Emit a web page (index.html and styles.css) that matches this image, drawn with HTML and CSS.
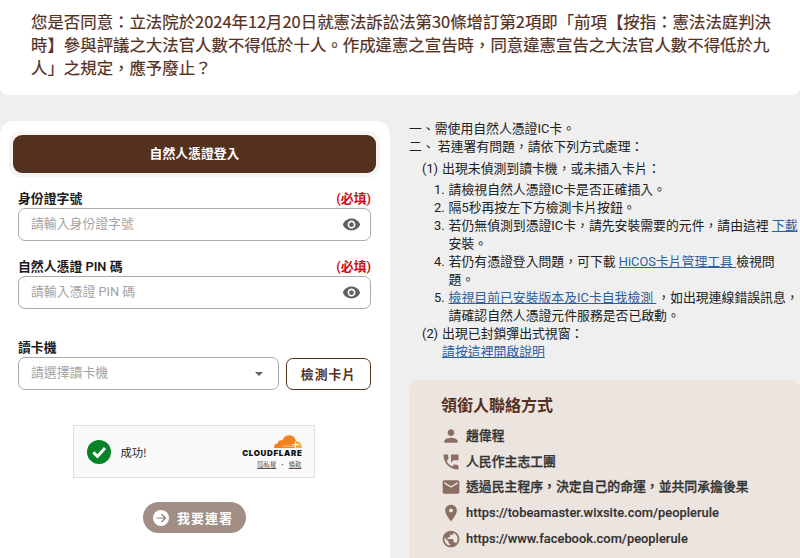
FILE: index.html
```html
<!DOCTYPE html>
<html lang="zh-Hant">
<head>
<meta charset="utf-8">
<title>連署</title>
<link rel="stylesheet" href="styles.css">
</head>
<body>
<header class="question">
  <p>您是否同意：立法院於2024年12月20日就憲法訴訟法第30條增訂第2項即「前項【按指：憲法法庭判決<br>時】參與評議之大法官人數不得低於十人。作成違憲之宣告時，同意違憲宣告之大法官人數不得低於九<br>人」之規定，應予廢止？</p>
</header>
<main class="columns">
  <section class="login">
    <div class="tabs"><button class="tab">自然人憑證登入</button></div>
    <div class="form">
      <div class="field">
        <div class="label"><span>身份證字號</span><span class="required">(必填)</span></div>
        <div class="input"><span>請輸入身份證字號</span>
          <svg class="eye" viewBox="0 0 24 24"><path d="M12 4.5C7 4.5 2.73 7.61 1 12c1.73 4.39 6 7.5 11 7.5s9.270-3.110 11-7.500c-1.730-4.390-6-7.500-11-7.500zM12 17c-2.760 0-5-2.240-5-5s2.240-5 5-5 5 2.240 5 5-2.240 5-5 5zm0-8c-1.660 0-3 1.340-3 3s1.340 3 3 3 3-1.340 3-3-1.340-3-3-3z"/></svg>
        </div>
      </div>
      <div class="field">
        <div class="label"><span>自然人憑證 PIN 碼</span><span class="required">(必填)</span></div>
        <div class="input"><span>請輸入憑證 PIN 碼</span>
          <svg class="eye" viewBox="0 0 24 24"><path d="M12 4.5C7 4.5 2.73 7.61 1 12c1.73 4.39 6 7.5 11 7.5s9.270-3.110 11-7.500c-1.730-4.390-6-7.500-11-7.500zM12 17c-2.760 0-5-2.240-5-5s2.240-5 5-5 5 2.240 5 5-2.240 5-5 5zm0-8c-1.660 0-3 1.340-3 3s1.340 3 3 3 3-1.340 3-3-1.340-3-3-3z"/></svg>
        </div>
      </div>
      <div class="field reader">
        <div class="label"><span>讀卡機</span></div>
        <div class="reader-row">
          <div class="input select"><span>請選擇讀卡機</span>
            <svg class="caret" viewBox="0 0 8 4"><path d="M0 0h8L4 4z"/></svg>
          </div>
          <button class="detect">檢測卡片</button>
        </div>
      </div>
    </div>
    <div class="captcha">
      <svg class="ok" viewBox="0 0 24 24"><circle cx="12" cy="12" r="12" fill="#078224"/><path d="M6.300 12.400l4.200 4L18 8" fill="none" stroke="#fff" stroke-width="3"/></svg>
      <span class="ok-text">成功!</span>
      <div class="brand">
        <svg class="cloud" viewBox="0 0 28 13"><path fill="#f6821f" d="M0 13C-.2 10 1.500 8.500 4 8.300 3.600 6 6 4.600 8 5.800 9.500 1.500 13-.2 16 .2c3.500.4 5.600 3 6 6L20 13z"/><path fill="#fbad41" d="M20 13l2-7c3.600.2 6 3 6 7z"/><path d="M9 11.200h12" fill="none" stroke="#fff" stroke-width=".6"/><path d="M21.500 6.500v6M18.500 9.500h6" fill="none" stroke="#fff" stroke-width="1"/></svg>
        <div class="wordmark">CLOUDFLARE</div>
        <div class="legal"><u>隱私權</u><span>•</span><u>條款</u></div>
      </div>
    </div>
    <button class="sign">
      <svg viewBox="0 0 16 16"><circle cx="8" cy="8" r="8" fill="#fff"/><path d="M3.500 8h9M8.500 4l4 4-4 4" fill="none" stroke="#8d7a72" stroke-width="1.100"/></svg>
      <span>我要連署</span>
    </button>
  </section>
  <aside class="side">
    <div class="help">
      <p>一、需使用自然人憑證IC卡。</p>
      <p>二、 若連署有問題，請依下列方式處理：</p>
      <div class="sub first"><span>(1)</span><p>出現未偵測到讀卡機，或未插入卡片：</p></div>
      <ol class="steps">
        <li><span>1.</span><p>請檢視自然人憑證IC卡是否正確插入。</p></li>
        <li><span>2.</span><p>隔5秒再按左下方檢測卡片按鈕。</p></li>
        <li><span>3.</span><p>若仍無偵測到憑證IC卡，請先安裝需要的元件，請由這裡 <a>下載</a><br>安裝。</p></li>
        <li><span>4.</span><p>若仍有憑證登入問題，可下載 <a>HiCOS卡片管理工具&nbsp;</a>&#8203;檢視問<br>題。</p></li>
        <li><span>5.</span><p><a>檢視目前已安裝版本及IC卡自我檢測&nbsp;</a><span class="after-link">，如出現連線錯誤訊息，</span><br>請確認自然人憑證元件服務是否已啟動。</p></li>
      </ol>
      <div class="sub"><span>(2)</span><p>出現已封鎖彈出式視窗：<br><a>請按這裡開啟說明</a></p></div>
    </div>
    <div class="contact">
      <h2>領銜人聯絡方式</h2>
      <ul>
        <li><svg viewBox="0 0 24 24"><path d="M12 12c2.210 0 4-1.790 4-4s-1.790-4-4-4-4 1.790-4 4 1.790 4 4 4zm0 2c-2.670 0-8 1.340-8 4v2h16v-2c0-2.660-5.330-4-8-4z"/></svg><span class="medium">趙偉程</span></li>
        <li><svg viewBox="0 0 24 24"><path d="M20 15.500c-1.250 0-2.450-.2-3.570-.570a1.020 1.020 0 0 0-1.020.240l-2.200 2.200a15.045 15.045 0 0 1-6.590-6.590l2.200-2.210c.280-.260.360-.650.250-1A11.360 11.360 0 0 1 8.500 4c0-.550-.450-1-1-1H4c-.550 0-1 .450-1 1 0 9.390 7.610 17 17 17 .550 0 1-.450 1-1v-3.500c0-.550-.450-1-1-1zM12 3v10l3-3h6V3z"/></svg><span class="medium">人民作主志工團</span></li>
        <li><svg viewBox="0 0 24 24"><path d="M20 4H4c-1.100 0-2 .9-2 2v12c0 1.100.9 2 2 2h16c1.100 0 2-.9 2-2V6c0-1.100-.9-2-2-2zm0 4l-8 5-8-5V6l8 5 8-5z"/></svg><span class="medium">透過民主程序，決定自己的命運，並共同承擔後果</span></li>
        <li><svg viewBox="0 0 24 24"><path d="M12 2C8.130 2 5 5.130 5 9c0 5.250 7 13 7 13s7-7.750 7-13c0-3.870-3.130-7-7-7zm0 9.500a2.500 2.500 0 0 1 0-5 2.500 2.500 0 0 1 0 5z"/></svg><span class="url">https://tobeamaster.wixsite.com/peoplerule</span></li>
        <li><svg viewBox="0 0 24 24"><path d="M12 2C6.480 2 2 6.480 2 12s4.480 10 10 10 10-4.480 10-10S17.520 2 12 2zm-1 17.930c-3.950-.490-7-3.850-7-7.930 0-.620.080-1.210.210-1.790L9 15v1c0 1.100.9 2 2 2zm6.900-2.540c-.260-.810-1-1.390-1.900-1.390h-1v-3c0-.550-.450-1-1-1H8v-2h2c.550 0 1-.450 1-1V7h2c1.100 0 2-.9 2-2v-.410c2.930 1.190 5 4.060 5 7.410 0 2.080-.8 3.970-2.100 5.390z"/></svg><span class="url">https://www.facebook.com/peoplerule</span></li>
      </ul>
    </div>
  </aside>
</main>
</body>
</html>
```
FILE: styles.css
```css
* { box-sizing: border-box; }
body {
  margin: 0;
  height: 558px;
  overflow: hidden;
  background: #efefef;
  color: #212121;
  font: 12.85px/18px Roboto, "Noto Sans CJK TC", sans-serif;
}
p, h2, ul, ol { margin: 0; padding: 0; list-style: none; }
button { font-family: inherit; border: 0; padding: 0; }
.question {
  height: 95px;
  padding: 10px 0 0 31px;
  background: #fff;
  border-radius: 0 0 8px 8px;
  color: #54301e;
  font: 16.41px/22.8px "Noto Sans CJK TC", sans-serif;
  -webkit-text-stroke: .2px currentColor;
  white-space: nowrap;
}
.columns { display: flex; gap: 19px; padding-top: 26px; }
.login {
  width: 390px;
  height: 450px;
  flex: none;
  padding: 10px 10px 0 9px;
  background: #fff;
  border-radius: 14px;
  display: flex;
  flex-direction: column;
  align-items: center;
}
.tabs {
  width: 371px;
  height: 46px;
  padding: 4px;
  background: #f5f5f5;
  border-radius: 11px;
}
.tab {
  display: block;
  width: 100%;
  height: 38px;
  padding-bottom: 3px;
  border-radius: 9px;
  background: #54301e;
  color: #fff;
  font-size: 12.85px;
  font-weight: 700;
}
.form { width: 353px; padding-top: 12px; }
.field { height: 68px; }
.label {
  display: flex;
  justify-content: space-between;
  height: 19px;
  color: #1b1b1b;
  font-weight: 600;
  line-height: 19px;
}
.required { color: #d00b14; }
.input {
  height: 33px;
  padding: 0 9px 2px 12px;
  border: 1px solid #ababab;
  border-radius: 7px;
  display: flex;
  align-items: center;
  justify-content: space-between;
  color: #a3a3a3;
}
.eye { width: 19px; height: 19px; fill: #616161; position: relative; top: 1px; }
.reader { padding-top: 13px; height: 96px; }
.reader-row { display: flex; gap: 7px; }
.select { width: 261px; padding-right: 15px; }
.caret { width: 8px; height: 4px; fill: #616161; position: relative; top: 1px; }
.detect {
  width: 85px;
  height: 32px;
  margin-top: 1px;
  padding-bottom: 1px;
  border: 1px solid #54301e;
  border-radius: 7px;
  background: #fff;
  color: #54301e;
  font-size: 12.85px;
  font-weight: 600;
  letter-spacing: 1px;
}
.captcha {
  width: 242px;
  height: 53px;
  margin: 4px 2px 0 0;
  padding: 0 12px 0 13px;
  border: 1px solid #e0e0e0;
  background: #fafafa;
  display: flex;
  align-items: center;
  color: #232323;
}
.ok { width: 24px; height: 24px; margin-right: 10px; }
.ok-text { font: 11.3px/18px "Noto Sans CJK TC", sans-serif; }
.brand {
  margin-left: auto;
  display: flex;
  flex-direction: column;
  align-items: flex-end;
}
.cloud { width: 28px; height: 13px; }
.wordmark {
  color: #111;
  font: 900 8px/9px Inter, sans-serif;
  letter-spacing: .65px;
  margin: 1px -1px 0 0;
}
.legal { display: flex; gap: 3px; margin-top: 2px; color: #555; font: 6.400px/9px "Noto Sans CJK TC", sans-serif; }
.sign {
  width: 103px;
  height: 31px;
  margin-top: 24px;
  border-radius: 16px;
  background: #a18e85;
  color: #fff;
  font-size: 13px;
  font-weight: 700;
  letter-spacing: 1px;
  display: flex;
  align-items: center;
  gap: 8px;
  padding-left: 10px;
}
.sign svg { width: 16px; height: 16px; }
.side { width: 391px; margin-top: -1px; white-space: nowrap; }
.help { height: 260px; }
.sub { display: flex; gap: 4px; padding-left: 13px; }
.sub.first { padding: 4px 0 3px 13px; }
.steps li { display: flex; gap: 4px; padding-left: 25px; }
a { color: #2d5f9f; text-decoration: underline; }
.after-link { margin-left: 1px; }
.contact {
  height: 190px;
  padding: 13px 0 0 32px;
  border-radius: 9px 9px 0 0;
  background: #ece4df;
  color: #333;
}
.contact h2 { color: #54301e; font-size: 16px; line-height: 26px; font-weight: 600; }
.contact ul { padding-top: 4px; }
.contact li {
  display: flex;
  align-items: center;
  gap: 5px;
  height: 25.800px;
  font-weight: 500;
}
.medium { -webkit-text-stroke: .3px currentColor; }
.url { letter-spacing: .03px; -webkit-text-stroke: .15px currentColor; }
.contact svg { width: 20px; height: 20px; fill: #8b6e62; }
```
